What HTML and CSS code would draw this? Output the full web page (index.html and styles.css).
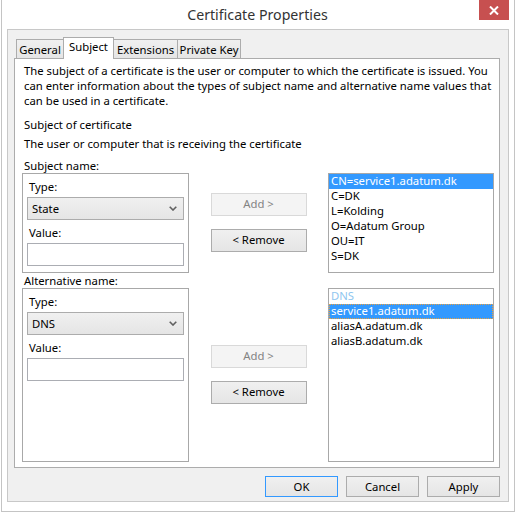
FILE: index.html
```html
<!DOCTYPE html>
<html>
<head>
<meta charset="utf-8">
<link rel="stylesheet" href="styles.css">
</head>
<body>
<div class="window">
  <div class="titlebar">
    <div class="title">Certificate Properties</div>
    <div class="close">
      <svg width="10" height="9" viewBox="0 0 10 9"><path d="M1 0.5 L9 8.5 M9 0.5 L1 8.5" stroke="#fff" stroke-width="2"/></svg>
    </div>
  </div>
  <div class="client">
    <div class="tabs">
      <div class="tab t-general">General</div>
      <div class="tab active t-subject">Subject</div>
      <div class="tab t-ext">Extensions</div>
      <div class="tab t-pk">Private Key</div>
    </div>
    <div class="panel">
      <p class="desc">The subject of a certificate is the user or computer to which the certificate is issued. You<br>can enter information about the types of subject name and alternative name values that<br>can be used in a certificate.</p>
      <p class="heading">Subject of certificate</p>
      <p class="sub">The user or computer that is receiving the certificate</p>
      <div class="label l1">Subject name:</div>
      <div class="row r1">
        <div class="group">
          <div class="flabel">Type:</div>
          <div class="select"><span>State</span><svg width="8" height="5" viewBox="0 0 8 5"><path d="M0.7 0.7 L4 4 L7.3 0.7" fill="none" stroke="#606060" stroke-width="1.6"/></svg></div>
          <div class="flabel">Value:</div>
          <div class="input"></div>
        </div>
        <div class="btns">
          <div class="btn disabled">Add &gt;</div>
          <div class="btn">&lt; Remove</div>
        </div>
        <div class="list">
          <div class="item selected">CN=service1.adatum.dk</div>
          <div class="item">C=DK</div>
          <div class="item">L=Kolding</div>
          <div class="item">O=Adatum Group</div>
          <div class="item">OU=IT</div>
          <div class="item">S=DK</div>
        </div>
      </div>
      <div class="label l2">Alternative name:</div>
      <div class="row r2">
        <div class="group">
          <div class="flabel">Type:</div>
          <div class="select"><span>DNS</span><svg width="8" height="5" viewBox="0 0 8 5"><path d="M0.7 0.7 L4 4 L7.3 0.7" fill="none" stroke="#606060" stroke-width="1.6"/></svg></div>
          <div class="flabel">Value:</div>
          <div class="input"></div>
        </div>
        <div class="btns">
          <div class="btn disabled">Add &gt;</div>
          <div class="btn">&lt; Remove</div>
        </div>
        <div class="list">
          <div class="item header">DNS</div>
          <div class="item selected focus">service1.adatum.dk</div>
          <div class="item">aliasA.adatum.dk</div>
          <div class="item">aliasB.adatum.dk</div>
        </div>
      </div>
    </div>
    <div class="footer">
      <div class="btn dlg default">OK</div>
      <div class="btn dlg">Cancel</div>
      <div class="btn dlg">Apply</div>
    </div>
  </div>
</div>
</body>
</html>
```
FILE: styles.css
```css
html, body {
  margin: 0;
  padding: 0;
  background: #ffffff;
}
body {
  font-family: "Noto Sans", "Open Sans", sans-serif;
  font-size: 11.3px;
  color: #000;
}
.window {
  box-sizing: border-box;
  width: 514px;
  height: 512px;
  margin-left: 1px;
  border: 1px solid #c4c4c4;
  border-top: none;
  background: #ffffff;
  overflow: hidden;
}
.titlebar {
  display: grid;
  grid-template-columns: 1fr auto 1fr;
  height: 29px;
}
.title {
  grid-column: 2;
  font-size: 14.2px;
  line-height: 30px;
  color: #333;
  margin-right: 1px;
}
.close {
  grid-column: 3;
  justify-self: end;
  align-self: start;
  width: 30px;
  height: 20px;
  margin-right: 5px;
  background: #c75050;
  display: flex;
  align-items: center;
  justify-content: center;
}
.client {
  box-sizing: border-box;
  margin: 0 5px;
  height: 473px;
  border: 1px solid #c8c8c8;
  background: #f0f0f0;
  padding: 7px 8px 0 6px;
}
.tabs {
  display: flex;
  align-items: flex-end;
  height: 21px;
  margin-left: 2px;
  position: relative;
  z-index: 2;
}
.tab {
  box-sizing: border-box;
  height: 19px;
  border: 1px solid #acacac;
  border-bottom: none;
  background: linear-gradient(#f0f0f0, #e5e5e5);
  text-align: center;
  line-height: 15px;
  padding-top: 2px;
  white-space: nowrap;
}
.tab.active {
  height: 22px;
  margin-bottom: -1px;
  padding-top: 1px;
  background: #ffffff;
}
.t-general { width: 47px; border-right: none; }
.t-subject { width: 51px; }
.t-ext { width: 63px; border-left: none; border-right: none; }
.t-pk { width: 64px; }
.panel {
  box-sizing: border-box;
  height: 410px;
  border: 1px solid #acacac;
  background: #ffffff;
  padding: 4px 5px 5px 7px;
  position: relative;
  z-index: 1;
}
p { margin: 0; }
.desc, .heading, .sub, .label {
  line-height: 15px;
  padding-left: 2px;
  white-space: nowrap;
}
.heading { margin-top: 9px; }
.sub { margin-top: 4px; }
.l1 { margin-top: 8px; height: 14px; line-height: 14px; }
.l2 { height: 15px; }
.row {
  display: grid;
  grid-template-columns: 167px 1fr 166px;
}
.r1 { height: 100px; }
.r2 { height: 174px; }
.group {
  box-sizing: border-box;
  border: 1px solid #a8a8a8;
  padding: 0 4px;
}
.flabel {
  line-height: 15px;
  margin-top: 5px;
  padding-left: 2px;
}
.select {
  box-sizing: border-box;
  height: 23px;
  margin-top: 3px;
  border: 1px solid #acacac;
  background: linear-gradient(#f0f0f0, #e5e5e5);
  display: flex;
  align-items: center;
  justify-content: space-between;
  padding: 0 6px 1px 4px;
}
.input {
  box-sizing: border-box;
  height: 23px;
  margin-top: 3px;
  border: 1px solid #abadb3;
  background: #ffffff;
}
.btns {
  display: flex;
  flex-direction: column;
  align-items: center;
  justify-content: center;
  gap: 13px;
  padding-bottom: 2px;
}
.btn {
  box-sizing: border-box;
  width: 96px;
  height: 23px;
  border: 1px solid #acacac;
  background: linear-gradient(#f0f0f0, #e5e5e5);
  display: flex;
  align-items: center;
  justify-content: center;
  padding-bottom: 2px;
}
.btn.disabled {
  background: #f4f4f4;
  border-color: #d9d9d9;
  color: #838383;
}
.list {
  box-sizing: border-box;
  border: 1px solid #a8a8a8;
  background: #ffffff;
}
.item {
  line-height: 14px;
  height: 15px;
  padding-left: 2px;
  white-space: nowrap;
}
.item.selected {
  background: #3399ff;
  color: #ffffff;
}
.item.header {
  color: #8fc6ef;
}
.item.focus {
  outline: 1px dotted #e8a040;
  outline-offset: -1px;
}
.footer {
  display: flex;
  justify-content: flex-end;
  gap: 8px;
  margin-top: 8px;
}
.btn.dlg {
  width: 73px;
  height: 21px;
  padding-bottom: 1px;
}
.btn.default {
  border-color: #3399ff;
}
```
